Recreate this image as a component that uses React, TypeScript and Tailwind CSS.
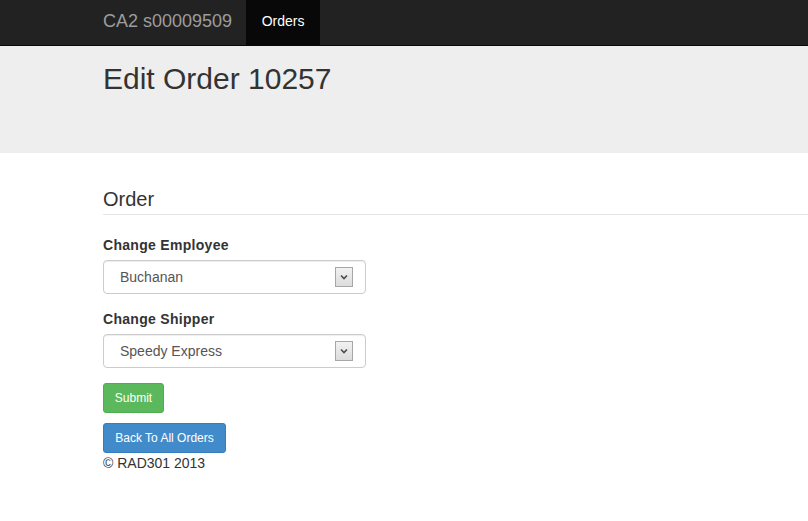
import React from "react";

function FakeSelect({ value }: { value: string }) {
  return (
    <div className="flex h-[34px] w-[263px] items-center justify-between rounded-[4px] border border-[#ccc] bg-white pl-4 pr-[12px] shadow-[inset_0_1px_1px_rgba(0,0,0,0.075)]">
      <span className="text-[14px] text-[#555]">{value}</span>
      {/* old-style windows dropdown button */}
      <span className="flex h-[20px] w-[18px] items-center justify-center border border-[#a7a7a7] bg-gradient-to-b from-[#f2f2f2] to-[#dcdcdc]">
        <svg width="8" height="6" viewBox="0 0 8 6">
          <path d="M1 1.5 L4 4.5 L7 1.5" stroke="#4a4a4a" strokeWidth="1.6" fill="none" />
        </svg>
      </span>
    </div>
  );
}

export default function App() {
  return (
    <div className="min-h-[521px] bg-white font-['Liberation_Sans',Arial,sans-serif] text-[#333]">
      {/* Navbar */}
      <nav className="h-[46px] border-b border-[#080808] bg-[#222]">
        <div className="flex h-[45px] items-stretch pl-[103px]">
          <span className="flex items-center pb-[2px] pr-[14px] text-[18px] text-[#9d9d9d]">CA2 s00009509</span>
          <span className="flex w-[74px] items-center justify-center bg-[#080808] pb-[2px] text-[14px] text-white">Orders</span>
        </div>
      </nav>

      {/* Page header */}
      <div className="h-[107px] bg-[#eee] pl-[103px] pt-[16px]">
        <h1 className="text-[30px] leading-[33px] text-[#333]">Edit Order 10257</h1>
      </div>

      {/* Form */}
      <div className="pl-[103px] pt-[35px]">
        <h3 className="border-b border-[#e5e5e5] pb-[4px] text-[20px] leading-[22px]">Order</h3>

        <div className="mt-[20px]">
          <label className="block text-[14px] font-bold leading-[20px] tracking-[0.3px]">Change Employee</label>
          <div className="mt-[5px]">
            <FakeSelect value="Buchanan" />
          </div>
        </div>

        <div className="mt-[15px]">
          <label className="block text-[14px] font-bold leading-[20px] tracking-[0.3px]">Change Shipper</label>
          <div className="mt-[5px]">
            <FakeSelect value="Speedy Express" />
          </div>
        </div>

        <button className="mt-[15px] block h-[30px] w-[61px] rounded-[3px] border border-[#4cae4c] bg-[#5cb85c] text-[12px] text-white">
          Submit
        </button>

        <button className="mt-[10px] block h-[30px] w-[123px] rounded-[3px] border border-[#357ebd] bg-[#428bca] text-[12px] text-white">
          Back To All Orders
        </button>

        <p className="text-[14px] leading-[20px]">© RAD301 2013</p>
      </div>
    </div>
  );
}
